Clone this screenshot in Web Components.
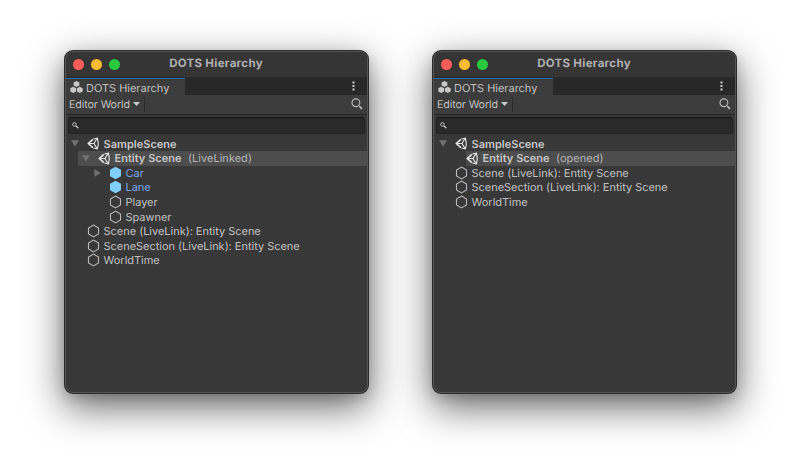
<!DOCTYPE html>
<html lang="en">
<head>
<meta charset="utf-8">
<title>DOTS Hierarchy</title>
<style>
body{margin:0;width:800px;height:473px;overflow:hidden;background:#fff;font-family:Inter,"Liberation Sans",sans-serif;font-size:11px;letter-spacing:-.02px;color:#c0c0c0;text-rendering:geometricPrecision}
main{display:flex;gap:65px;padding:51px 0 0 65px}
</style>
</head>
<body>
<main>
<editor-window heading="DOTS Hierarchy">
  <tree-row level="0" arrow="down" icon="unity"><b>SampleScene</b></tree-row>
  <tree-row level="1" arrow="down" icon="unity" class="selected"><b>Entity Scene</b><span slot="note">(LiveLinked)</span></tree-row>
  <tree-row level="2" arrow="right" icon="prefab">Car</tree-row>
  <tree-row level="2" icon="prefab">Lane</tree-row>
  <tree-row level="2" icon="entity">Player</tree-row>
  <tree-row level="2" icon="entity">Spawner</tree-row>
  <tree-row level="0" icon="entity">Scene (LiveLink): Entity Scene</tree-row>
  <tree-row level="0" icon="entity">SceneSection (LiveLink): Entity Scene</tree-row>
  <tree-row level="0" icon="entity">WorldTime</tree-row>
</editor-window>
<editor-window heading="DOTS Hierarchy">
  <tree-row level="0" arrow="down" icon="unity"><b>SampleScene</b></tree-row>
  <tree-row level="1" icon="unity" class="selected leaf"><b>Entity Scene</b><span slot="note">(opened)</span></tree-row>
  <tree-row level="0" icon="entity">Scene (LiveLink): Entity Scene</tree-row>
  <tree-row level="0" icon="entity">SceneSection (LiveLink): Entity Scene</tree-row>
  <tree-row level="0" icon="entity">WorldTime</tree-row>
</editor-window>
</main>
<script>
const ICONS = {
  unity: '<svg width="13" height="13" viewBox="0 0 13 13" fill="none" stroke="#e4e4e4"><path d="M5.900 2.300 1.300 6.500l4.600 4.200" stroke-width="1.600"/><path d="M1.500 6.500h5.600M7 6.500l2.900-4.700M7 6.500l2.900 4.700" stroke-width="1.150"/><path d="M6.400 2l4-.9.700 3.500M6.400 11l4 .9.700-3.500M11.100 4.500v4" stroke-width="1.150"/></svg>',
  prefab: '<svg width="13" height="14" viewBox="0 0 13 14"><path d="M6.500.7 12 3.800v6.400l-5.500 3.100L1 10.200V3.800z" fill="#81d0fb"/></svg>',
  entity: '<svg width="13" height="14" viewBox="0 0 13 14"><path d="M6.500 1.100l5 2.900v6l-5 2.900-5-2.900V4z" fill="none" stroke="#b9b9b9" stroke-width="1.100"/></svg>',
  down: '<svg width="8" height="7" viewBox="0 0 8 7"><path d="M0 .3h8L4 6.800z" fill="#6f6f6f"/></svg>',
  right: '<svg width="7" height="8" viewBox="0 0 7 8"><path d="M.3 0v8l6.500-4z" fill="#6f6f6f"/></svg>',
  group: '<svg width="13" height="12" viewBox="0 0 13 12" fill="#c8c8c8"><path d="M6.500 0l2.900 1.500v3L6.500 6 3.600 4.500v-3zM3.200 5.800l2.900 1.500v3.100L3.200 12 .3 10.400V7.300zM9.800 5.800l2.900 1.500v3.100L9.800 12l-2.900-1.600V7.300z"/></svg>',
  caret: '<svg width="7" height="4" viewBox="0 0 7 4"><path d="M0 0h7L3.500 4z" fill="#c8c8c8"/></svg>',
  lens: '<svg width="12" height="12" viewBox="0 0 12 12" fill="none" stroke="#b4b4b4"><circle cx="4.900" cy="4.700" r="3.900" stroke-width="1.200"/><path d="M7.700 7.700l1.500 1.500" stroke-width="1"/><path d="M8.900 8.700l2 2.200" stroke-width="1.900"/></svg>',
  smallLens: '<svg width="7" height="7" viewBox="0 0 7 7" fill="none" stroke="#c4c4c4"><circle cx="2.500" cy="2.500" r="1.800"/><path d="M4 4l2.300 2.300" stroke-width="1.300"/></svg>',
  dots: '<svg width="3" height="10" viewBox="0 0 3 10" fill="#d0d0d0"><path d="M.5.500h2v2h-2zM.5 4h2v2h-2zM.5 7.500h2v2h-2z"/></svg>'
};

class TreeRow extends HTMLElement {
  connectedCallback() {
    const arrow = this.getAttribute('arrow'), icon = this.getAttribute('icon');
    const level = +this.getAttribute('level');
    this.attachShadow({mode: 'open'}).innerHTML = `<style>
      :host{display:flex;align-items:center;height:14.600px;margin-left:${level * 11}px;white-space:pre;${icon === 'prefab' ? 'color:#7ba5ec' : ''}}
      :host(.selected){background:#4d4d4d}
      :host(.leaf){margin-left:31.500px}
      :host(.leaf) .arrow{display:none}
      :host(.leaf) .icon{margin-left:0}
      .arrow{width:9px;display:flex;justify-content:center;margin-left:4px}
      .icon{width:13px;display:flex;justify-content:center;margin-left:7.500px;margin-right:3.500px}
      ::slotted(b){font-weight:600;color:#c6c6c6;letter-spacing:.02px}
      ::slotted(span){margin-left:6.500px;color:#b5b5b5;letter-spacing:.02px}
      svg{display:block;flex:none}
    </style><span class="arrow">${ICONS[arrow] || ''}</span><span class="icon">${ICONS[icon]}</span><slot></slot><slot name="note"></slot>`;
  }
}

class EditorWindow extends HTMLElement {
  connectedCallback() {
    const h = this.getAttribute('heading');
    this.attachShadow({mode: 'open'}).innerHTML = `<style>
      :host{display:block;box-sizing:border-box;width:303px;height:342px;flex:none;border:1px solid #545454;border-radius:8px;background:#383838;overflow:hidden;
        box-shadow:0 0 0 1px #2b2b2b,0 13px 38px 1px rgba(0,0,0,.6),0 4px 12px 1px rgba(0,0,0,.14)}
      header{display:grid;grid-template-columns:60px 1fr 60px;align-items:center;height:25px;background:#353535}
      .lights{display:flex;gap:7px;padding:0 0 1px 6.500px}
      .lights i{width:11px;height:11px;border-radius:50%;background:#ff5f57}
      .lights i:nth-child(2){background:#febc2e}
      .lights i:nth-child(3){background:#28c840}
      h1{margin:0 1px 3px 0;text-align:center;font-size:11.500px;line-height:14px;font-weight:700;color:#b0b0b0;letter-spacing:.3px}
      .tabs{box-sizing:border-box;display:flex;justify-content:space-between;height:18px;background:#282828;align-items:stretch}
      .tab{box-sizing:border-box;width:119px;margin-top:1px;border-top:1px solid #2c6fad;background:#3c3c3c;display:flex;align-items:center;gap:3px;padding-left:4px}
      .tab span{padding-top:2px;line-height:15px}
      .menu{display:flex;align-items:center;padding-right:12.500px}
      .bar{box-sizing:border-box;height:20px;background:#3c3c3c;border-bottom:1px solid #232323;display:flex;align-items:center;justify-content:space-between;padding:0 4px 1px 3px}
      .world{display:flex;align-items:center;gap:3.500px;border-right:1px solid #292929;padding-right:4px;height:15px}
      .search{box-sizing:border-box;height:17px;margin:2px 2px 2.400px 2px;border:1px solid #212121;border-top-color:#141414;border-radius:3px;background:#2a2a2a;display:flex;align-items:center;padding-left:3px}
      .world span{font-size:10.700px;letter-spacing:-.1px;padding-top:1px}
      .tree{padding:0 0 0 .5px}
      svg{display:block}
    </style>
    <header><div class="lights"><i></i><i></i><i></i></div><h1>${h}</h1></header>
    <div class="tabs"><div class="tab">${ICONS.group}<span>${h}</span></div><div class="menu">${ICONS.dots}</div></div>
    <div class="bar"><div class="world"><span>Editor World</span>${ICONS.caret}</div>${ICONS.lens}</div>
    <div class="search">${ICONS.smallLens}</div>
    <div class="tree"><slot></slot></div>`;
  }
}
customElements.define('tree-row', TreeRow);
customElements.define('editor-window', EditorWindow);
</script>
</body>
</html>
